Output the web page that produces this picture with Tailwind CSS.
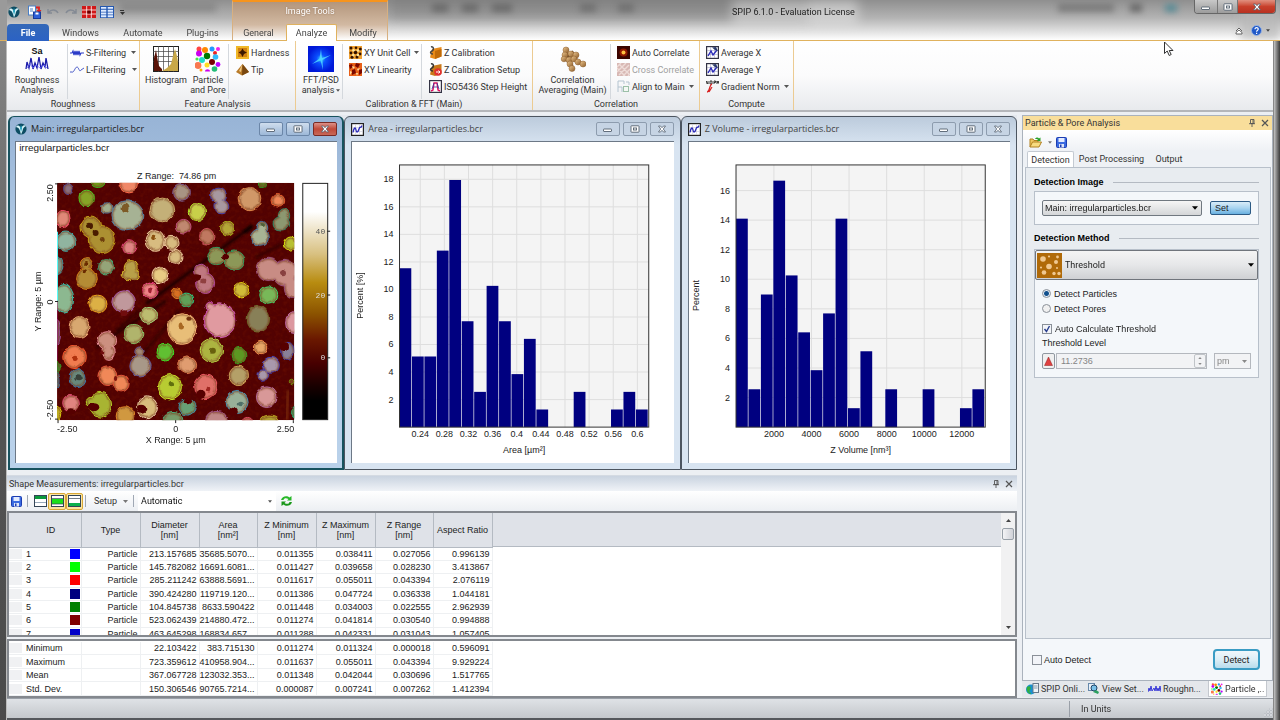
<!DOCTYPE html>
<html lang="en">
<head>
<meta charset="utf-8">
<title>SPIP 6.1.0 - Evaluation License</title>
<script src="https://cdn.jsdelivr.net/npm/@tailwindcss/browser@4"></script>
</head>
<body class="h-screen overflow-hidden bg-[#4a4a4a] [font-family:Roboto,'Open_Sans',sans-serif] text-[9px] leading-[10px] text-[#333]">
<svg class="absolute size-0" aria-hidden="true">
  <defs>
    <linearGradient id="gBrown" x1="0" y1="0" x2="1" y2="1"><stop offset="0" stop-color="#eec890"/><stop offset="1" stop-color="#8b5a28"/></linearGradient>
  </defs>
  <symbol id="logo" viewBox="0 0 12 12"><circle cx="6" cy="6" r="5.6" fill="#0d4d63"/><path d="M1 4C3 1 5 3 6 6C7 3 9 1 11 3C9 4 8 5 7.5 8L6 11.5L5 8C4 5 3 4.500 1 4Z" fill="#d8f4fa"/><path d="M6 2l1.200 3L6 9L5 5Z" fill="#2aa5c0"/></symbol>
  <symbol id="save" viewBox="0 0 11 11"><rect x=".5" y=".5" width="10" height="10" rx="1" fill="#3a6ae0" stroke="#1c3cb0"/><rect x="2.500" y="1" width="6" height="4" fill="#e4ecff"/><rect x="3" y="7" width="5" height="3.500" fill="#dfe6f8"/><rect x="4" y="7.500" width="1.500" height="2.500" fill="#1c3cb0"/></symbol>
  <symbol id="arrow" viewBox="0 0 5 3"><path d="M0 0h5L2.500 3Z" fill="currentColor"/></symbol>
  <symbol id="chart" viewBox="0 0 13 13"><rect x=".6" y=".6" width="11.800" height="11.800" fill="#fff" stroke="#222" stroke-width="1.200"/><path d="M4.500 1v11M8.500 1v11M1 4.500h11M1 8.500h11" stroke="#c8c8d8" stroke-width=".6"/><path d="M2 9.500C3 4 4.500 4 5 7S7 9.500 8 6S10 6 11 2.500" fill="none" stroke="#2b2bb8" stroke-width="1.300"/></symbol>
  <symbol id="avg" viewBox="0 0 13 13"><rect x=".6" y=".6" width="11.800" height="11.800" fill="#fff" stroke="#334" stroke-width="1.200"/><path d="M4.500 1v11M8.500 1v11M1 4.500h11M1 8.500h11" stroke="#a8a8c8" stroke-width=".6"/><path d="M2 10L5 5L7 9L11 4" fill="none" stroke="#2b2bb8" stroke-width="1.400"/><path d="M6 1.500L10 1L12 5L9 4Z" fill="#2c3c6c"/></symbol>
  <symbol id="win-min" viewBox="0 0 12 8"><rect x="1.500" y="4" width="8" height="2.500" rx=".5" fill="#fff" stroke="#53606e" stroke-width=".9"/></symbol>
  <symbol id="win-max" viewBox="0 0 12 8"><rect x="2" y=".8" width="8" height="6.400" rx=".5" fill="#fff" stroke="#53606e" stroke-width=".9"/><rect x="4.500" y="3" width="3" height="2" fill="#fff" stroke="#53606e" stroke-width=".9"/></symbol>
  <symbol id="win-x" viewBox="0 0 12 8"><path d="M2.500 1h2L6 2.700L7.500 1h2L7.300 4L9.500 7h-2L6 5.300L4.500 7h-2L4.700 4Z" fill="#fff" stroke="#53606e" stroke-width=".8"/></symbol>
  <symbol id="pin" viewBox="0 0 8 8"><path d="M2.500.5h3.500V4.500H2.500ZM5 .5V4.500M1 4.700H7M4 4.700V8" fill="none" stroke="#555" stroke-width=".9"/></symbol>
  <symbol id="cross" viewBox="0 0 8 8"><path d="M1 1L7 7M7 1L1 7" stroke="#555" stroke-width="1.200"/></symbol>
  <symbol id="dots" viewBox="0 0 26 26"><g><circle cx="4" cy="3" r="2.500" fill="#f44"/><circle cx="10" cy="4" r="3" fill="#f80"/><circle cx="17" cy="3" r="2.500" fill="#29f"/><circle cx="23" cy="3" r="2" fill="#e2e"/><circle cx="4" cy="7.500" r="3" fill="#c0e"/><circle cx="20" cy="7" r="2" fill="#e22"/><circle cx="12" cy="10" r="3.200" fill="#070"/><circle cx="20.500" cy="11" r="2.800" fill="#3bf"/><circle cx="7" cy="14" r="3" fill="#2dc"/><circle cx="2" cy="13" r="1.600" fill="#4e4"/><circle cx="17" cy="16" r="3" fill="#700"/><circle cx="3" cy="19.500" r="3.400" fill="#f87850"/><circle cx="12" cy="19" r="2.500" fill="#fd2"/><circle cx="23" cy="18.500" r="2.400" fill="#b0f"/><circle cx="19.500" cy="23" r="2.800" fill="#2b7"/><path d="M10 25.500c0-3 5-3 5 0Z" fill="#c0e"/><circle cx="6" cy="24" r="1.500" fill="#fa0"/></g></symbol>
</svg>

<div class="flex h-full flex-col">
  <!-- title bar and ribbon tabs -->
  <header class="relative flex h-[41px] shrink-0 flex-col border-b border-[#e0b25e] bg-linear-to-b from-[#8f8f8f] via-[#b4b4b4] via-45% to-white">
    <div class="pointer-events-none absolute inset-0 overflow-hidden" aria-hidden="true">
      <div class="absolute -top-2 left-[388px] h-7 w-[420px] bg-[#6f6f6f]/40 blur-[6px]"></div>
      <div class="absolute top-1 left-[120px] h-2 w-24 bg-[#666]/40 blur-[3px]"></div>
      <div class="absolute top-1 left-[432px] h-2 w-4 bg-[#555]/60 blur-[3px]"></div>
      <div class="absolute top-1 left-[462px] h-2 w-4 bg-[#555]/60 blur-[3px]"></div>
      <div class="absolute top-1 left-[492px] h-2 w-5 bg-[#555]/60 blur-[3px]"></div>
      <div class="absolute top-1 left-[580px] h-2 w-4 bg-[#555]/50 blur-[3px]"></div>
      <div class="absolute top-1 left-[618px] h-2 w-4 bg-[#555]/50 blur-[3px]"></div>
      <div class="absolute top-0 left-[732px] h-6 w-[126px] bg-white/40 blur-[6px]"></div>
      <div class="absolute top-1 left-[1058px] h-2 w-14 bg-[#555]/50 blur-[3px]"></div>
      <div class="absolute top-1 left-[1130px] h-2 w-3 bg-[#444]/60 blur-[3px]"></div>
      <div class="absolute top-1 left-[1165px] h-2 w-3 bg-[#5a8c96] blur-[3px]"></div>
      <div class="absolute top-0 right-0 h-full w-10 bg-[#b8b8b8]/70 blur-[4px]"></div>
      <div class="absolute top-0 left-0 h-full w-[7px] bg-[#9a9a9a]"></div>
      <div class="absolute inset-y-0 left-[232px] w-[156px] border-x border-t-2 border-x-[#d8b080] border-t-[#f7941d] bg-linear-to-b from-[#b3967c] via-[#d2b9a2] via-60% to-white"></div>
    </div>
    <div class="relative grid h-6 grid-cols-[232px_156px_1fr_auto] items-start">
      <div class="flex h-6 items-center gap-2 pl-2">
        <svg class="size-3"><use href="#logo"/></svg>
        <div class="flex items-center gap-1">
          <button aria-label="Import" class="size-[14px]"><svg class="size-[14px]" viewBox="0 0 14 14"><rect x=".5" y="1" width="7" height="9" fill="#fff" stroke="#4a80c8"/><path d="M2 4h3M2 6h3" stroke="#4a80c8"/><path d="M8 2.500h3V6" fill="none" stroke="#e02020" stroke-width="1.800"/><path d="M8.500 5h5L11 8Z" fill="#e02020"/><rect x="5.500" y="7" width="7" height="6.500" fill="#2d5fd8" stroke="#173a9c"/><rect x="7.500" y="7.500" width="3" height="2" fill="#fff"/></svg></button>
          <button aria-label="Undo" class="size-[14px]"><svg class="size-[14px]" viewBox="0 0 14 14"><path d="M2 4v4h4M2.500 7.500C5 4 10 4 12 8" fill="none" stroke="#848a94" stroke-width="1.500"/></svg></button>
          <button aria-label="Redo" class="size-[14px]"><svg class="size-[14px]" viewBox="0 0 14 14"><path d="M12 4v4H8M11.500 7.500C9 4 4 4 2 8" fill="none" stroke="#848a94" stroke-width="1.500"/></svg></button>
          <button aria-label="Grid view" class="h-3 w-[14px]"><svg class="h-3 w-[14px]" viewBox="0 0 14 12"><rect width="14" height="12" fill="#d01818"/><path d="M4.700 0v12M9.300 0v12M0 4h14M0 8h14" stroke="#fff" stroke-width=".8"/><rect x="5.300" y="4.600" width="3.400" height="3" fill="#600"/></svg></button>
          <button aria-label="Table view" class="h-3 w-[14px]"><svg class="h-3 w-[14px]" viewBox="0 0 14 12"><rect width="14" height="12" fill="#2458b0"/><path d="M1 3.700h5.300v2H1ZM7.700 3.700H13v2H7.700ZM1 6.500h5.300v2H1ZM7.700 6.500H13v2H7.700ZM1 9.300h5.300v2H1ZM7.700 9.300H13v2H7.700ZM1 1h5.300v1.800H1ZM7.700 1H13v1.800H7.700Z" fill="#e0ecff"/></svg></button>
          <button aria-label="Customize quick access" class="flex w-2 flex-col items-center gap-px text-[#333]"><span class="h-px w-1 bg-[#333]"></span><svg class="h-[3px] w-[5px]"><use href="#arrow"/></svg></button>
        </div>
      </div>
      <div class="pt-[6px] text-center text-white [text-shadow:0_0_2px_#8a6a50]">Image Tools</div>
      <div class="pt-[7px] pl-[344px] text-[#222]">SPIP 6.1.0 - Evaluation License</div>
      <div class="mr-1 flex h-[14px] overflow-hidden rounded-b border border-t-0 border-[#666] bg-white/20">
        <button aria-label="Minimize" class="flex w-[23px] items-center justify-center border-r border-[#777] bg-linear-to-b from-[#c8c8c8] to-[#9c9c9c]"><svg class="h-2 w-3"><use href="#win-min"/></svg></button>
        <button aria-label="Maximize" class="flex w-5 items-center justify-center border-r border-[#777] bg-linear-to-b from-[#c8c8c8] to-[#9c9c9c]"><svg class="h-2 w-3"><use href="#win-max"/></svg></button>
        <button aria-label="Close" class="flex w-[37px] items-center justify-center bg-linear-to-b from-[#e09080] via-[#c8402c] to-[#b83020]"><svg class="h-2 w-3"><use href="#win-x"/></svg></button>
      </div>
    </div>
    <nav class="relative -mb-px flex h-[17px] items-stretch pr-[10px] pl-[7px] text-[#444]">
      <button class="w-[42px] rounded-t-sm bg-linear-to-b from-[#3468b8] to-[#2b62c4] font-bold text-white">File</button>
      <button class="w-[63px]">Windows</button>
      <button class="w-[62px]">Automate</button>
      <button class="w-[57px]">Plug-ins</button>
      <button class="w-[55px]">General</button>
      <button class="w-[51px] rounded-t-xs border border-b-0 border-[#e0b25e] bg-white">Analyze</button>
      <button class="w-[52px]">Modify</button>
      <span class="flex-1"></span>
      <span class="flex items-start gap-2 pt-[1px]">
        <button aria-label="Collapse ribbon"><svg class="mt-[2px] h-2 w-2" viewBox="0 0 8 8"><path d="M1 4L4 1L7 4M1 7V5.500L4 3L7 5.500V7Z" fill="#fff" stroke="#555" stroke-width=".9"/></svg></button>
        <button aria-label="Help" class="flex items-center gap-1"><svg class="size-[11px]" viewBox="0 0 11 11"><circle cx="5.500" cy="5.500" r="5" fill="#1f58c8" stroke="#9ab4e0"/><path d="M4 4.200C4 2 7.300 2.200 7.200 4.200C7.200 5.300 5.600 5.200 5.600 6.700M5.600 7.800V9" fill="none" stroke="#fff" stroke-width="1.200"/></svg><svg class="h-[3px] w-[4px]"><use href="#arrow"/></svg></button>
      </span>
    </nav>
  </header>

  <div class="flex min-h-0 flex-1">
    <div class="w-[7px] shrink-0 border-r border-[#bbb] bg-linear-to-b from-[#858585] via-[#555] to-[#4a4a4a]"></div>
    <div class="flex min-w-0 flex-1 flex-col bg-[#eceff3]">
      <!-- ribbon -->
      <div class="flex h-[71px] shrink-0 border-b-2 border-[#b4b6ba] bg-linear-to-b from-white via-[#fbfbfc] to-[#e8eaed] whitespace-nowrap">
        <section class="flex w-[133px] flex-col border-r border-[#eccb92]">
          <div class="flex h-[58px] pt-[3px]">
            <button class="flex w-[60px] flex-col items-center"><svg class="mt-[2px] h-[26px] w-6" viewBox="0 0 24 26"><text x="12" y="8" text-anchor="middle" font-family="Liberation Sans" font-size="9" font-weight="bold" fill="#111">Sa</text><path d="M1 23L2 16L4 22L6 12L8 23L10 17L12 22L14 11L16 23L18 17L20 21L21 12L23 23" fill="none" stroke="#1a1aa8" stroke-width="1.300"/><path d="M2 22L5 18L8 22L11 19L15 22L19 19L22 22" fill="none" stroke="#6a6aff" stroke-width=".8"/></svg><span class="mt-[3px]">Roughness<br>Analysis</span></button>
            <div class="flex flex-col border-l border-[#d4d8dd] pl-[2px]">
              <button class="flex h-[17px] items-center"><svg class="mr-[2px] h-3 w-[14px]" viewBox="0 0 14 12"><path d="M0 6H2L3 4L4 8L5 4L6 8L7 4L8 8L9 4L10 8L11 6H14" fill="none" stroke="#2a3ac8" stroke-width="1.200"/></svg>S-Filtering<svg class="ml-[5px] h-[3px] w-[5px] text-[#555]"><use href="#arrow"/></svg></button>
              <button class="flex h-[17px] items-center"><svg class="mr-[2px] h-3 w-[14px]" viewBox="0 0 14 12"><path d="M0 8H2C4 9 5 3 7 3S9 9 11 6L14 4" fill="none" stroke="#4a5ac8"/></svg>L-Filtering<svg class="ml-[6px] h-[3px] w-[5px] text-[#555]"><use href="#arrow"/></svg></button>
            </div>
          </div>
          <div class="text-center">Roughness</div>
        </section>
        <section class="flex w-[156px] flex-col border-r border-[#eccb92]">
          <div class="flex h-[58px] pt-[3px]">
            <button class="ml-[4px] flex w-[44px] flex-col items-center"><svg class="mt-[2px] size-[26px]" viewBox="0 0 26 26"><rect x=".5" y=".5" width="25" height="25" fill="#fff" stroke="#222"/><path d="M5.500 0v26M10.500 0v26M15.500 0v26M20.500 0v26M0 5.500h26M0 10.500h26M0 15.500h26" stroke="#444" stroke-width=".7"/><path d="M1 25V12L2 8L3 4L4 10L5 16L6 20L9 23V25Z" fill="#5a1408"/><path d="M9 25L14 22L18 18L20 10L22 3L24 10L25 16V25Z" fill="#c8a848"/></svg><span class="mt-[3px]">Histogram</span></button>
            <button class="flex w-[40px] flex-col items-center"><svg class="mt-[2px] size-[26px]"><use href="#dots"/></svg><span class="mt-[3px]">Particle<br>and Pore</span></button>
            <div class="flex flex-col border-l border-[#d4d8dd] pl-[7px]">
              <button class="flex h-[17px] items-center"><svg class="mr-[2px] size-[13px]" viewBox="0 0 13 13"><rect width="13" height="13" fill="#f0b828"/><rect x="2" y="2" width="9" height="9" fill="#d08010"/><path d="M6.500 2.500L8 5L11 6.500L8 8L6.500 11L5 8L2.500 6.500L5 5Z" fill="#3a1800"/></svg>Hardness</button>
              <button class="flex h-[17px] items-center"><svg class="mr-[2px] size-[13px]" viewBox="0 0 13 13"><path d="M6.500 1L0 9L6 12.500L13 9Z" fill="#b87a28"/><path d="M6.500 1L6 12.500L13 9Z" fill="#7a4810"/><path d="M6.500 1L3 8L5 9Z" fill="#f0c880"/></svg>Tip</button>
            </div>
          </div>
          <div class="text-center">Feature Analysis</div>
        </section>
        <section class="flex w-[237px] flex-col border-r border-[#eccb92]">
          <div class="flex h-[58px] pt-[3px]">
            <button class="flex w-[46px] flex-col items-center pl-1"><svg class="mt-[2px] size-[26px]" viewBox="0 0 26 26"><defs><radialGradient id="fft"><stop offset="0" stop-color="#3cf"/><stop offset=".35" stop-color="#0a50ff"/><stop offset="1" stop-color="#0018d8"/></radialGradient></defs><rect width="26" height="26" fill="url(#fft)"/><path d="M13 3L14 12L23 9L14.500 14L15 24L12.500 14.500L4 18L11.500 12.500Z" fill="#5df" opacity=".8"/></svg><span class="mt-[3px]">FFT/PSD<br><span class="flex items-center">analysis<svg class="ml-[2px] h-[3px] w-[4px] text-[#555]"><use href="#arrow"/></svg></span></span></button>
            <div class="flex w-[79px] flex-col border-l border-[#d4d8dd] pl-[6px]">
              <button class="flex h-[17px] items-center"><svg class="mr-[2px] size-[13px]" viewBox="0 0 13 13"><rect width="13" height="13" fill="#f0a030"/><g fill="#301000"><circle cx="2" cy="2" r="1.500"/><circle cx="7" cy="1.800" r="1.300"/><circle cx="11.300" cy="3" r="1.500"/><circle cx="2" cy="7" r="1.400"/><circle cx="6.500" cy="6.500" r="1.800"/><circle cx="11" cy="8" r="1.400"/><circle cx="3" cy="11.300" r="1.500"/><circle cx="8" cy="11" r="1.500"/></g><g fill="#ffe8a0"><circle cx="4.500" cy="4.300" r="1.200"/><circle cx="9" cy="4.500" r="1.200"/><circle cx="4.300" cy="9" r="1.200"/><circle cx="9" cy="9" r="1.200"/></g></svg>XY Unit Cell<svg class="ml-1 h-[3px] w-[5px] text-[#555]"><use href="#arrow"/></svg></button>
              <button class="flex h-[17px] items-center"><svg class="mr-[2px] size-[13px]" viewBox="0 0 13 13"><rect width="13" height="13" fill="#e86018"/><path d="M0 2L3 1L4 4L1 6ZM7 0L11 1L9 5L6 3ZM3 7L6 6L7 10L3 12ZM10 7L13 6V10L10 12Z" fill="#7a0800"/><path d="M3 3L6 4L4 6ZM8 6L11 5L9 8ZM1 8L3 9L1 12ZM7 10L9 10L8 13Z" fill="#ffe0a0"/></svg>XY Linearity</button>
            </div>
            <div class="flex flex-col border-l border-[#d4d8dd] pl-[7px]">
              <button class="flex h-[17px] items-center"><svg class="mr-[2px] size-[13px]" viewBox="0 0 13 13"><path d="M3 3L12.500 1V10.500L6 13L1 11.500Z" fill="#e88a18"/><path d="M6 5L12.500 3V10.500L6 13Z" fill="#c06a08"/><path d="M2 1C5 0 5 4 3 5S1 8 4 8" fill="none" stroke="#444" stroke-width="1.500"/></svg>Z Calibration</button>
              <button class="flex h-[17px] items-center"><svg class="mr-[2px] size-[13px]" viewBox="0 0 13 13"><path d="M3 3L12.500 1V10.500L6 13L1 11.500Z" fill="#c87818"/><path d="M2 1C5 0 5 4 3 5S1 8 4 8" fill="none" stroke="#333" stroke-width="1.500"/><circle cx="9" cy="9" r="3.800" fill="#e03030"/><path d="M7 9h4M9.500 7.500L11 9L9.500 10.500" stroke="#fff" fill="none"/></svg>Z Calibration Setup</button>
              <button class="flex h-[17px] items-center"><svg class="mr-[2px] size-[13px]" viewBox="0 0 13 13"><rect x=".6" y=".6" width="11.800" height="11.800" fill="#fff" stroke="#334" stroke-width="1.200"/><path d="M2 11L4 10L5 3H8L9 10L11 11" fill="none" stroke="#e01060" stroke-width="1.400"/><path d="M4.500 7H8.500M5 3L3 9M8 3L10 9" stroke="#2838a0" stroke-width=".8"/></svg>ISO5436 Step Height</button>
            </div>
          </div>
          <div class="text-center">Calibration &amp; FFT (Main)</div>
        </section>
        <section class="flex w-[167px] flex-col border-r border-[#eccb92]">
          <div class="flex h-[58px] pt-[3px]">
            <button class="flex w-[77px] flex-col items-center pl-[2px]"><svg class="mt-[2px] size-[26px]" viewBox="0 0 26 26"><path d="M6 4L10 18L12 24M6 8L14 12L23 18M5 13L13 20M12 5L17 13" stroke="#402000" stroke-width="1.500"/><g fill="url(#gBrown)" stroke="#8a5a28" stroke-width=".5"><circle cx="6" cy="4" r="3"/><circle cx="5" cy="9" r="3"/><circle cx="4" cy="13" r="2.800"/><circle cx="11" cy="8" r="3"/><circle cx="16" cy="9" r="3"/><circle cx="9" cy="14" r="3"/><circle cx="14" cy="13" r="3"/><circle cx="10" cy="18" r="3"/><circle cx="18" cy="16" r="3"/><circle cx="23" cy="18" r="3"/><circle cx="12" cy="22.500" r="3"/></g></svg><span class="mt-[3px]">Correlation<br>Averaging (Main)</span></button>
            <div class="flex flex-col border-l border-[#d4d8dd] pl-[6px]">
              <button class="flex h-[17px] items-center"><svg class="mr-[2px] size-[13px]" viewBox="0 0 13 13"><rect width="13" height="13" fill="#3a0400"/><circle cx="6.500" cy="6.500" r="4" fill="#901800"/><circle cx="6.500" cy="6.500" r="2" fill="#ffc040"/></svg>Auto Correlate</button>
              <button disabled class="flex h-[17px] items-center text-[#a0a0a0]"><svg class="mr-[2px] size-[13px]" viewBox="0 0 13 13"><rect width="13" height="13" fill="#d8b8b4"/><path d="M0 4L4 0M0 9L9 0M2 12L12 2M6 13L13 6M11 13L13 11M2 1L12 11M0 5L8 13" stroke="#eedcd8" stroke-width="1.400"/></svg>Cross Correlate</button>
              <button class="flex h-[17px] items-center"><svg class="mr-[2px] size-[13px]" viewBox="0 0 13 13"><path d="M1 12V1H7V4M1 7H5V12" fill="none" stroke="#b4c4d0"/><rect x="6.500" y="6.500" width="5" height="5" fill="#f4f8f4" stroke="#9cc0a8"/><path d="M9 2h3v3" fill="none" stroke="#b4c4d0"/></svg>Align to Main<svg class="ml-1 h-[3px] w-[5px] text-[#555]"><use href="#arrow"/></svg></button>
            </div>
          </div>
          <div class="text-center">Correlation</div>
        </section>
        <section class="flex w-[94px] flex-col border-r border-[#eccb92]">
          <div class="flex h-[58px] flex-col pt-[3px] pl-[6px]">
            <button class="flex h-[17px] items-center"><svg class="mr-[2px] size-[13px]"><use href="#avg"/></svg>Average X</button>
            <button class="flex h-[17px] items-center"><svg class="mr-[2px] size-[13px]"><use href="#avg"/></svg>Average Y</button>
            <button class="flex h-[17px] items-center"><svg class="mr-[2px] size-[13px]" viewBox="0 0 13 13"><path d="M0 1V4M0 1L2 4V1M4 1H6V4H4ZM8 4V1H9.500V2.500H8M11 4V1L12 3L13 1V4" fill="none" stroke="#222" stroke-width=".9"/><path d="M1 12C4 12 3 5 6 4M3 12L6 7" fill="none" stroke="#d82020" stroke-width="1.200"/></svg>Gradient Norm<svg class="ml-1 h-[3px] w-[5px] text-[#555]"><use href="#arrow"/></svg></button>
          </div>
          <div class="text-center">Compute</div>
        </section>
      </div>

      <div class="flex min-h-0 flex-1 pt-[3px]">
        <main class="flex min-w-0 flex-1 flex-col">
          <!-- document windows -->
          <div class="flex min-h-0 flex-1 bg-[#e4e8ee] pt-px pl-px text-[#333]">
            <article class="flex min-w-0 flex-1 flex-col rounded-t-md border-2 border-t border-[#17525e] bg-linear-to-b from-[#98b4d6] via-[#b9d1ea] to-[#b9d1ea] px-[5px] pb-[5px]">
              <div class="flex h-6 items-center gap-[3px]">
                <svg class="mr-px size-3"><use href="#logo"/></svg><h2 class="flex-1 [font-family:'Open_Sans',sans-serif] text-[#222]">Main: irregularparticles.bcr</h2>
                <button aria-label="Minimize" class="flex h-[14px] w-6 items-center justify-center rounded-xs border border-[#6b86a8] bg-linear-to-b from-[#cfdded] to-[#9db8d8]"><svg class="h-2 w-3"><use href="#win-min"/></svg></button>
                <button aria-label="Maximize" class="flex h-[14px] w-6 items-center justify-center rounded-xs border border-[#6b86a8] bg-linear-to-b from-[#cfdded] to-[#9db8d8]"><svg class="h-2 w-3"><use href="#win-max"/></svg></button>
                <button aria-label="Close" class="flex h-[14px] w-6 items-center justify-center rounded-xs border border-[#7a2a24] bg-linear-to-b from-[#dc9088] via-[#c04838] to-[#c86858]"><svg class="h-2 w-3"><use href="#win-x"/></svg></button>
              </div>
              <div class="min-h-0 flex-1 border-t border-l border-[#6c7886] bg-white"><svg id="scan" class="block h-full w-full" viewBox="16 141 322 322" font-family="Liberation Sans, sans-serif" font-size="9" fill="#222"></svg></div>
            </article>
            <article class="flex min-w-0 flex-1 flex-col rounded-t-md border border-[#4c5560] bg-linear-to-b from-[#bccbdc] to-[#d8e4f1] to-8% px-[6px] pb-[6px]">
              <div class="flex h-6 items-center gap-[3px]">
                <svg class="mr-px size-[13px]"><use href="#chart"/></svg><h2 class="flex-1 [font-family:'Open_Sans',sans-serif] text-[#444]">Area - irregularparticles.bcr</h2>
                <button aria-label="Minimize" class="flex h-[14px] w-6 items-center justify-center rounded-xs border border-[#8d9cae] bg-[#c6d4e4]"><svg class="h-2 w-3"><use href="#win-min"/></svg></button>
                <button aria-label="Maximize" class="flex h-[14px] w-6 items-center justify-center rounded-xs border border-[#8d9cae] bg-[#c6d4e4]"><svg class="h-2 w-3"><use href="#win-max"/></svg></button>
                <button aria-label="Close" class="flex h-[14px] w-6 items-center justify-center rounded-xs border border-[#8d9cae] bg-[#c6d4e4]"><svg class="h-2 w-3"><use href="#win-x"/></svg></button>
              </div>
              <div class="min-h-0 flex-1 border-t border-l border-[#6c7886] bg-white"><svg id="area" class="block h-full w-full" viewBox="352 141 322 322" font-family="Liberation Sans, sans-serif" font-size="9" fill="#222"></svg></div>
            </article>
            <article class="flex min-w-0 flex-1 flex-col rounded-t-md border border-[#4c5560] bg-linear-to-b from-[#bccbdc] to-[#d8e4f1] to-8% px-[6px] pb-[6px]">
              <div class="flex h-6 items-center gap-[3px]">
                <svg class="mr-px size-[13px]"><use href="#chart"/></svg><h2 class="flex-1 [font-family:'Open_Sans',sans-serif] text-[#444]">Z Volume - irregularparticles.bcr</h2>
                <button aria-label="Minimize" class="flex h-[14px] w-6 items-center justify-center rounded-xs border border-[#8d9cae] bg-[#c6d4e4]"><svg class="h-2 w-3"><use href="#win-min"/></svg></button>
                <button aria-label="Maximize" class="flex h-[14px] w-6 items-center justify-center rounded-xs border border-[#8d9cae] bg-[#c6d4e4]"><svg class="h-2 w-3"><use href="#win-max"/></svg></button>
                <button aria-label="Close" class="flex h-[14px] w-6 items-center justify-center rounded-xs border border-[#8d9cae] bg-[#c6d4e4]"><svg class="h-2 w-3"><use href="#win-x"/></svg></button>
              </div>
              <div class="min-h-0 flex-1 border-t border-l border-[#6c7886] bg-white"><svg id="zvol" class="block h-full w-full" viewBox="689 141 322 322" font-family="Liberation Sans, sans-serif" font-size="9" fill="#222"></svg></div>
            </article>
          </div>

          <!-- shape measurements -->
          <section class="mt-[5px] flex h-[223px] shrink-0 flex-col border-t border-[#d4dae2]">
            <div class="flex h-[15px] items-center bg-linear-to-b from-[#c9d3e0] to-[#f0f3f7] pr-1 pl-[2px]">
              <h2 class="flex-1">Shape Measurements: irregularparticles.bcr</h2>
              <button aria-label="Pin panel" class="mr-[5px]"><svg class="size-2"><use href="#pin"/></svg></button>
              <button aria-label="Close panel"><svg class="size-2"><use href="#cross"/></svg></button>
            </div>
            <div class="flex h-5 items-center bg-linear-to-b from-white to-[#eceff3] pl-1">
              <button aria-label="Save"><svg class="size-[11px]"><use href="#save"/></svg></button>
              <span class="mr-1 ml-[5px] h-3 w-px bg-[#a0a8b4]"></span>
              <button aria-label="Show header" class="flex h-[17px] w-4 items-center justify-center"><svg class="h-3 w-[13px]" viewBox="0 0 13 12"><rect x=".5" y=".5" width="12" height="11" fill="#fff" stroke="#345"/><path d="M1 1h11v3H1Z" fill="#0b9a3c"/><path d="M1 7.500h11" stroke="#9ab"/></svg></button>
              <button aria-label="Show rows" class="flex h-[17px] w-[18px] items-center justify-center rounded-xs border border-[#d8a838] bg-[#fbe4a0]"><svg class="h-3 w-[13px]" viewBox="0 0 13 12"><rect x=".5" y=".5" width="12" height="11" fill="#fff" stroke="#345"/><path d="M1 4h11v5H1Z" fill="#1ae01a"/><path d="M1 3.500h11M1 9h11" stroke="#345" stroke-width=".7"/></svg></button>
              <button aria-label="Show summary" class="flex h-[17px] w-[17px] items-center justify-center rounded-xs border border-[#d8a838] bg-[#fbe4a0]"><svg class="h-3 w-[13px]" viewBox="0 0 13 12"><rect x=".5" y=".5" width="12" height="11" fill="#fff" stroke="#345"/><path d="M1 8h11v3H1Z" fill="#0bb04c"/><path d="M1 3.500h11" stroke="#345" stroke-width=".7"/></svg></button>
              <span class="mx-[2px] h-3 w-px bg-[#a0a8b4]"></span>
              <button class="ml-[6px] flex items-center">Setup<svg class="ml-[6px] h-[3px] w-[5px] text-[#777]"><use href="#arrow"/></svg></button>
              <span class="mr-1 ml-[5px] h-3 w-px bg-[#a0a8b4]"></span>
              <div class="relative flex h-full w-[138px] items-center"><select aria-label="Measurement mode" class="h-full w-full appearance-none bg-white pr-3 pl-[3px] leading-[14px] text-[#111]"><option>Automatic</option></select><svg class="pointer-events-none absolute right-1 h-[3px] w-[4px] text-[#555]"><use href="#arrow"/></svg></div>
              <button aria-label="Refresh" class="ml-1"><svg class="h-3 w-[13px]" viewBox="0 0 13 12"><path d="M1 5C2 1 7 0 9.500 2.500L11.500 1V5.500H7L8.500 4C6 2.500 4 3 3.500 5Z" fill="#28b828"/><path d="M12 7C11 11 6 12 3.500 9.500L1.500 11V6.500H6L4.500 8C7 9.500 9 9 9.500 7Z" fill="#1a981a"/></svg></button>
            </div>
            <div class="flex h-[126px] shrink-0 border-2 border-[#84888e] bg-white [font-family:Liberation_Sans,sans-serif] text-[#222]">
              <div class="flex min-w-0 flex-1 items-start overflow-hidden bg-white">
                  <table class="w-[483px] shrink-0 table-fixed border-collapse">
                    <colgroup><col class="w-[72px]"><col class="w-[59px]"><col class="w-[59px]"><col class="w-[58px]"><col class="w-[59px]"><col class="w-[59px]"><col class="w-[58px]"><col class="w-[59px]"></colgroup>
                    <thead class="bg-[#dfe2e8]"><tr class="h-[34px]">
                      <th class="border-r border-b border-[#b4bac2] pl-3 font-normal">ID</th><th class="border-r border-b border-[#b4bac2] font-normal">Type</th><th class="border-r border-b border-[#b4bac2] font-normal">Diameter<br>[nm]</th><th class="border-r border-b border-[#b4bac2] font-normal">Area<br>[nm²]</th><th class="border-r border-b border-[#b4bac2] font-normal">Z Minimum<br>[nm]</th><th class="border-r border-b border-[#b4bac2] font-normal">Z Maximum<br>[nm]</th><th class="border-r border-b border-[#b4bac2] font-normal">Z Range<br>[nm]</th><th class="border-r border-b border-[#b4bac2] font-normal">Aspect Ratio</th>
                    </tr></thead>
                    <tbody id="rows" class="bg-white"></tbody>
                  </table>
                  <div class="h-[34px] flex-1 border-b border-[#b4bac2] bg-[#dfe2e8]"></div>
              </div>
              <div class="flex w-[14px] flex-col items-center bg-[#f1f1f2] py-[6px]" role="scrollbar" aria-controls="rows" aria-valuenow="0">
                <svg class="h-[3px] w-[5px] rotate-180 text-[#444]"><use href="#arrow"/></svg>
                <span class="mt-[6px] h-3 w-3 rounded-xs border border-[#98a0a8] bg-linear-to-r from-[#f4f4f6] to-[#d0d2d8]"></span>
                <span class="flex-1"></span>
                <svg class="h-[3px] w-[5px] text-[#444]"><use href="#arrow"/></svg>
              </div>
            </div>
            <div class="mt-[2px] h-[59px] shrink-0 border-2 border-[#84888e] bg-white pt-px [font-family:Liberation_Sans,sans-serif] text-[#222]">
              <table class="h-[54px] w-[483px] table-fixed border-collapse">
                <colgroup><col class="w-[72px]"><col class="w-[59px]"><col class="w-[59px]"><col class="w-[58px]"><col class="w-[59px]"><col class="w-[59px]"><col class="w-[58px]"><col class="w-[59px]"></colgroup>
                <tbody id="summary"></tbody>
              </table>
            </div>
          </section>
        </main>

        <!-- particle & pore analysis -->
        <aside class="ml-[5px] flex w-[251px] shrink-0 flex-col">
          <div class="flex min-h-0 flex-1 flex-col border border-[#aab2bc] bg-[#f4f7fa]">
            <div class="flex h-[14px] shrink-0 items-center bg-[#f9de9b] pr-[3px] pl-[2px]"><h2 class="flex-1">Particle &amp; Pore Analysis</h2><button aria-label="Pin panel" class="mr-[5px]"><svg class="size-2"><use href="#pin"/></svg></button><button aria-label="Close panel"><svg class="size-2"><use href="#cross"/></svg></button></div>
            <div class="flex h-[21px] shrink-0 items-center bg-linear-to-b from-white to-[#eef1f5] pt-[3px] pl-[6px]">
              <button aria-label="Open" class="flex items-center gap-[6px]"><svg class="h-3 w-[13px]" viewBox="0 0 13 12"><path d="M1 11V3H4L5 4.500H9V6" fill="#f0c860" stroke="#b08020"/><path d="M1 11L3.500 6H12.500L10 11Z" fill="#f8dc80" stroke="#b08020"/><path d="M6 3C7 1 9 1 10 2.500L11.500 1.500V5H8L9 3.800C8 3 7 3 6 3Z" fill="#28a028"/></svg><svg class="h-[3px] w-[4px] text-[#777]"><use href="#arrow"/></svg></button>
              <button aria-label="Save" class="ml-[4px]"><svg class="size-[11px]"><use href="#save"/></svg></button>
            </div>
            <div class="flex h-[16px] shrink-0 items-stretch bg-[#eef1f5] pl-1" role="tablist">
              <button role="tab" aria-selected="true" class="w-[47px] rounded-t-xs border border-b-0 border-[#c4cad2] bg-white">Detection</button>
              <button role="tab" class="w-[75px]">Post Processing</button>
              <button role="tab" class="w-[40px]">Output</button>
            </div>
            <div class="mr-[1px] ml-[2px] flex min-h-0 flex-1 flex-col border border-[#b8c0ca] bg-[#e8ecf0] pr-[11px] pl-2 [font-family:Liberation_Sans,sans-serif] text-[#222]">
              <div class="mt-[9px] flex items-center gap-[9px] font-bold text-black"><h3>Detection Image</h3><span class="h-px flex-1 bg-[#b4bac2]"></span></div>
              <div class="mt-1 flex h-[34px] shrink-0 items-center gap-2 border border-[#b8c0ca] bg-[#f4f7fa] px-[7px]">
                <div class="relative flex flex-1 items-center"><select aria-label="Detection image" class="h-4 w-full appearance-none rounded-xs border border-[#707880] bg-linear-to-b from-[#f6f6f6] to-[#d4d6d8] pl-[2px]"><option>Main: irregularparticles.bcr</option></select><svg class="pointer-events-none absolute right-1 h-[4px] w-[6px] text-black"><use href="#arrow"/></svg></div>
                <button class="h-[14px] w-[41px] rounded-xs border border-[#2c5a84] bg-linear-to-b from-[#d8ecf8] via-[#a8d4f0] to-[#68b0e0] pl-1 text-left">Set</button>
              </div>
              <div class="mt-2 flex items-center gap-[9px] font-bold text-black"><h3>Detection Method</h3><span class="h-px flex-1 bg-[#b4bac2]"></span></div>
              <div class="mt-[6px] flex shrink-0 flex-col border border-[#b8c0ca] bg-[#f4f7fa] pb-2">
                <div class="relative flex h-[30px] items-center"><select aria-label="Detection method" class="h-[30px] w-full appearance-none rounded-xs border border-[#70757c] bg-linear-to-b from-[#f4f4f4] via-[#e6e7e9] to-[#cfd1d4] pl-[29px] [font-family:Roboto,sans-serif]"><option>Threshold</option></select>
                  <svg class="pointer-events-none absolute left-[2px] size-[25px]" viewBox="0 0 25 25"><rect width="25" height="25" fill="#b06a08"/><g fill="#f0c890"><circle cx="6" cy="6" r="2.800"/><circle cx="12" cy="13.500" r="2.800"/><circle cx="19" cy="9" r="2"/><circle cx="7" cy="19.500" r="2.300"/><circle cx="20.500" cy="4" r="1.400"/><circle cx="12" cy="3.500" r="1.100"/><circle cx="4" cy="14.500" r="1.100"/><circle cx="17" cy="20.500" r="1.700"/><circle cx="22" cy="20.500" r="1.700"/><circle cx="20" cy="15" r="1"/></g></svg>
                  <svg class="pointer-events-none absolute right-1 h-[4px] w-[6px] text-black"><use href="#arrow"/></svg></div>
                <div class="flex flex-col px-[7px] pt-[6px]">
                  <label class="flex h-[15px] items-center gap-[3px]"><input type="radio" name="target" checked class="size-[9px] appearance-none rounded-full border border-[#8a9098] bg-white bg-radial from-[#10508c] from-40% to-[#e4eef6] to-60%">Detect Particles</label>
                  <label class="flex h-[15px] items-center gap-[3px]"><input type="radio" name="target" class="size-[9px] appearance-none rounded-full border border-[#8a9098] bg-[#f0f0f0]">Detect Pores</label>
                  <label class="relative mt-[5px] flex h-[15px] items-center gap-[3px]"><input type="checkbox" checked class="peer size-[10px] appearance-none border border-[#8a9098] bg-[#f2f4f8]"><svg class="pointer-events-none absolute left-[1px] hidden size-2 peer-checked:block" viewBox="0 0 8 8"><path d="M1.500 4L3.500 6.500L6.500 1" fill="none" stroke="#263c8c" stroke-width="1.400"/></svg>Auto Calculate Threshold</label>
                  <label for="level" class="h-[15px] leading-[15px]">Threshold Level</label>
                  <div class="mt-[2px] flex h-4 items-stretch">
                    <button aria-label="Lock level" class="mr-px flex w-[13px] items-center justify-center rounded-xs border border-[#9098a0] bg-[#f0f0f0]"><svg class="size-[9px]" viewBox="0 0 9 9"><path d="M4.500 0L8.500 8.500H.5Z" fill="#e04040" stroke="#902020" stroke-width=".5"/></svg></button>
                    <div class="flex w-[151px] border border-[#b4b8be] bg-[#f2f3f5]"><input id="level" disabled value="11.2736" class="min-w-0 flex-1 pl-1 text-[#858585]">
                      <span class="flex w-3 flex-col items-center justify-center gap-[4px] rounded-xs border border-[#c0c4c8] text-[#888]"><svg class="h-[2px] w-1 rotate-180" viewBox="0 0 5 3"><path d="M0 0h5L2.500 3Z" fill="currentColor"/></svg><svg class="h-[2px] w-1" viewBox="0 0 5 3"><path d="M0 0h5L2.500 3Z" fill="currentColor"/></svg></span></div>
                    <div class="relative ml-[7px] flex w-[37px] items-center"><select aria-label="Unit" disabled class="h-full w-full appearance-none border border-[#b4b8be] bg-[#f2f3f5] pl-[2px] text-[#888]"><option>pm</option></select><svg class="pointer-events-none absolute right-1 h-[3px] w-[5px] text-[#888]"><use href="#arrow"/></svg></div>
                  </div>
                </div>
              </div>
            </div>
            <div class="flex h-[41px] shrink-0 items-center justify-between pr-3 pl-[9px] [font-family:Liberation_Sans,sans-serif] text-[#222]">
              <label class="flex items-center gap-[2px]"><input type="checkbox" class="size-[10px] appearance-none border border-[#8a9098] bg-[#f2f4f8]">Auto Detect</label>
              <button class="h-[21px] w-[47px] rounded-sm border-2 border-[#3a9cc4] bg-linear-to-b from-[#f0f7fb] via-[#dceef6] to-[#b8dcec] [font-family:Roboto,sans-serif]">Detect</button>
            </div>
          </div>
          <nav class="mb-[1px] flex h-[16px] shrink-0 items-center bg-[#e4e7eb] pl-1">
            <button class="flex w-[62px] items-center gap-[2px]"><svg class="h-3 w-[13px]" viewBox="0 0 13 12"><circle cx="5" cy="6.500" r="5" fill="#1890d0"/><path d="M1 4C4 2 6 5 4 7S6 10 5 11C2 11 0 8 1 4Z" fill="#30b040"/><rect x="7" y=".5" width="5.500" height="9" fill="#eef4f8" stroke="#678"/><path d="M8 3h3.500M8 5h3.500" stroke="#89a"/></svg>SPIP Onli...</button>
            <button class="flex w-[60px] items-center gap-[2px]"><svg class="h-3 w-[12px]" viewBox="0 0 12 12"><rect x=".5" y=".5" width="6" height="7" fill="#e8f0f8" stroke="#68a"/><circle cx="6" cy="5" r="3" fill="#7ac0e8" stroke="#246" /><path d="M5 9L10 11L11 9L8 7Z" fill="#2ca060"/></svg>View Set...</button>
            <button class="flex flex-1 items-center gap-[2px]"><svg class="h-2 w-[13px]" viewBox="0 0 13 8"><path d="M0 7L1 3L2 6L3 1L4 6L6 3L7 6L8 1L9 6L10 3L11 6L12 1L13 7" fill="none" stroke="#3a3ad8"/></svg>Roughn...</button>
            <button class="mr-[6px] flex h-full w-[59px] items-center gap-[2px] border-x border-b border-[#c4c8ce] bg-white pl-[2px]"><svg class="size-3"><use href="#dots"/></svg>Particle ,..</button>
          </nav>
        </aside>
      </div>

      <footer class="flex h-5 shrink-0 items-center justify-end border-t border-[#9aa0a8] bg-linear-to-b from-[#dfe2e6] to-[#c4c8cc]">
        <div class="flex h-4 w-[204px] items-center border-l border-[#9aa0a8] pl-[11px]"><span class="flex-1">In Units</span>
          <svg class="size-[9px] self-end" viewBox="0 0 9 9"><path d="M6 0h2v2H6ZM3 3h2v2H3ZM6 3h2v2H6ZM0 6h2v2H0ZM3 6h2v2H3ZM6 6h2v2H6Z" fill="#f4f5f6" stroke="#9aa0a8" stroke-width=".4"/></svg></div>
      </footer>
      <div class="h-[2px] shrink-0 bg-[#55585c]"></div>
    </div>
    <div class="w-[7px] shrink-0 border-l border-[#888] bg-linear-to-r from-[#c4c4c4] to-[#3c3c3c]"></div>
  </div>
</div>

<svg class="pointer-events-none absolute top-[41px] left-[1163px] h-4 w-3" viewBox="0 0 12 16" aria-hidden="true"><path d="M1.500 1V12.500L4.200 10L6.200 14.500L8.200 13.500L6.200 9.500H10Z" fill="#fff" stroke="#333"/></svg>

<script>
// Particle outlines: centre x, centre y, radius x, radius y, fill, contour (three units per screen pixel).
const P=[
[203,232,13,15,'#8a7080','#4040a0'],[292,212,20,14,'#6f9a18','#30c020'],[386,214,27,28,'#f08868','#ff6040'],[258,260,22,24,'#86a428','#40d820'],[187,322,20,25,'#e08878','#f04060'],
[545,243,24,24,'#a89484','#705098'],[655,252,23,22,'#a898a0','#3030b0'],[665,285,20,20,'#a898a0','#3030b0'],[751,262,33,34,'#d09868','#e08040'],[835,267,18,18,'#f08858','#e05020'],[788,216,12,10,'#588020','#20a020'],
[320,290,16,16,'#a0b090','#3c6ea0'],[382,312,47,44,'#a6b294','#3c6ea0'],[486,296,36,36,'#c4b078','#c8a060'],[593,302,25,26,'#c8d048','#b0f020'],[550,345,21,21,'#c08870','#c04080'],[682,352,20,20,'#b4a838','#a8b010'],[621,375,22,24,'#c07860','#d04858'],
[852,312,16,20,'#8c9870','#208060'],[844,336,24,21,'#8c9870','#208060'],[787,350,15,20,'#a8b494','#3068a0'],[781,378,26,25,'#a8b494','#3068a0'],[272,347,30,30,'#ac9030','#c8a010'],[305,385,38,40,'#ac9030','#c8a010'],[196,390,29,28,'#90b4a0','#30a0a0'],[388,408,20,20,'#e08484','#e03070'],
[466,388,28,30,'#d8bc80','#f0c8a0'],[515,395,20,20,'#d8bc80','#f0c8a0'],[527,437,20,20,'#d8bc80','#f0c8a0'],[872,397,18,20,'#b8c030','#e0f000'],[650,436,26,25,'#8c9858','#20a060'],[704,447,29,28,'#8c9858','#20a060'],[170,462,16,26,'#80a090','#3090a0'],[318,467,23,22,'#94a478','#30a870'],
[257,458,17,18,'#b08830','#d88010'],[259,502,30,31,'#b48c34','#d88010'],[480,492,24,24,'#e8cc84','#f8d0b0'],[604,478,20,19,'#c07880','#b040a0'],[616,515,26,30,'#c07880','#b040a0'],[806,475,34,34,'#c88c84','#8c3c78'],[855,485,36,38,'#c88c84','#8c3c78'],[880,530,26,30,'#c88c84','#8c3c78'],
[450,538,22,22,'#f08088','#f03080'],[530,548,14,15,'#d87020','#f08020'],[559,566,20,20,'#60a058','#20c880'],[725,536,22,22,'#d0bc38','#f0e000'],[806,552,26,25,'#78b858','#30e070'],[190,562,28,42,'#8cb890','#20c0b0'],[292,578,26,26,'#dcb044','#f0a010'],[371,572,33,33,'#c0989c','#a048b0'],
[446,613,24,24,'#bcbc70','#a0e080'],[546,653,43,45,'#e8be78','#f8b070'],[630,585,12,12,'#e09aa0','#d040c0'],[660,628,46,50,'#e09aa0','#d040c0'],[775,623,33,38,'#888058','#686020'],[882,635,24,30,'#dc98a0','#c060b0'],[238,648,29,32,'#d8a870','#f0a870'],[401,668,28,28,'#b0b46c','#80c060'],
[320,688,27,26,'#cc9080','#f090a0'],[325,724,18,22,'#cc9080','#f090a0'],[223,738,33,33,'#f07c50','#f04820'],[420,765,31,31,'#a89888','#5048a0'],[417,722,13,14,'#a08878','#5048a0'],[495,724,24,24,'#60c030','#30f020'],[562,762,26,24,'#e09c70','#e07040'],[635,718,34,34,'#acb440','#b8e040'],[783,710,19,19,'#e8a868','#f08040'],[718,733,21,24,'#5c9820','#30a020'],
[814,762,23,23,'#a898ac','#3030c0'],[790,793,15,16,'#a898ac','#3030c0'],[864,720,18,26,'#888098','#3030b0'],[232,802,23,26,'#68887c','#3070b0'],[322,795,26,27,'#f08858','#e04830'],[362,817,23,24,'#f08858','#e04830'],[510,828,35,37,'#b8cc30','#d0f020'],[617,828,33,36,'#e07068','#f05060'],[716,794,28,28,'#b4a068','#d0a050'],[800,858,30,30,'#d89898','#b060a0'],
[211,878,24,24,'#e08480','#e04070'],[300,882,32,38,'#a8b430','#b8d820'],[270,872,12,12,'#a8b430','#b8d820'],[375,915,27,27,'#d09840','#e08020'],[441,890,29,32,'#d8bc7c','#f0d0b0'],[562,890,25,24,'#68a074','#3090b0'],[518,925,28,20,'#789c6c','#40b880'],[711,874,32,32,'#98b098','#3090c0'],[650,930,33,28,'#c08888','#a05090'],[810,928,25,12,'#b0a030','#c0b020'],
[168,770,12,18,'#40802c','#20b020'],[166,910,16,24,'#c0b020','#e0d000'],[168,665,10,40,'#805060','#a050b0'],[888,905,12,16,'#40a060','#20c080'],[742,930,14,10,'#d06060','#e04060'],[168,810,9,22,'#607880','#306090'],[878,814,6,6,'#804810','#709010'],[392,470,20,22,'#b8a048','#d8b820'],[384,490,18,16,'#b8a048','#d8b820'],[402,492,14,14,'#b8a048','#d8b820']];
// Dark pits inside or at the edge of particles.
const D=[[375,290,12,14,'#7d5a28'],[268,344,9,8,'#4a1c00'],[285,364,9,9,'#4a1c00'],[305,386,7,7,'#704010'],[459,380,7,8,'#8a5010'],[257,457,6,6,'#6a2c00'],[253,482,6,6,'#6a2c00'],[678,437,12,9,'#560404'],[590,498,14,10,'#560404'],[849,485,9,9,'#884040'],[612,510,9,9,'#904040'],[450,538,7,7,'#a02030'],[371,605,12,9,'#700c10'],[543,645,8,9,'#a86820'],[566,622,8,6,'#703010'],[223,741,8,8,'#b03010'],[638,718,9,9,'#686010'],[235,801,11,9,'#384038'],[513,820,8,8,'#607010'],[626,836,7,8,'#a02820'],[602,850,14,14,'#560404'],[280,888,16,12,'#560404'],[425,896,16,12,'#560404'],[563,870,12,9,'#560404'],[700,902,13,12,'#560404'],[722,880,9,8,'#507068'],[855,708,12,12,'#560404'],[345,803,5,9,'#801808'],[212,902,14,8,'#560404'],[305,724,6,8,'#700c10'],[788,340,7,6,'#506038']];
const ell=(a,x='')=>`<ellipse cx="${a[0]}" cy="${a[1]}" rx="${a[2]}" ry="${a[3]}" ${x}/>`;
document.getElementById('scan').innerHTML=`
<defs><clipPath id="cp"><rect x="57" y="182" width="238" height="238"/></clipPath>
<linearGradient id="bar" x1="0" y1="0" x2="0" y2="1"><stop offset="0" stop-color="#fff"/><stop offset=".12" stop-color="#fff"/><stop offset=".3" stop-color="#d8c080"/><stop offset=".42" stop-color="#b88c10"/><stop offset=".55" stop-color="#8c5400"/><stop offset=".66" stop-color="#6a1800"/><stop offset=".76" stop-color="#480000"/><stop offset=".86" stop-color="#180000"/><stop offset=".92" stop-color="#000"/></linearGradient>
<filter id="soft"><feGaussianBlur stdDeviation="3"/></filter><filter id="softer"><feGaussianBlur stdDeviation="1.500"/></filter>
<filter id="rough" x="-5%" y="-5%" width="110%" height="110%"><feTurbulence baseFrequency=".04" numOctaves="1" seed="4" result="n"/><feDisplacementMap in="SourceGraphic" in2="n" scale="5" xChannelSelector="R" yChannelSelector="G"/></filter>
<filter id="grain"><feTurbulence type="fractalNoise" baseFrequency=".25" numOctaves="2"/><feColorMatrix values="0 0 0 0 .5  0 0 0 0 .05  0 0 0 0 0  1.500 0 0 0 -.6"/></filter></defs>
<text x="19" y="150" font-size="10">irregularparticles.bcr</text><text x="177" y="178" text-anchor="middle" xml:space="preserve">Z Range:  74.86 pm</text>
<g clip-path="url(#cp)"><rect x="57" y="182" width="238" height="238" fill="#520202"/><rect x="57" y="182" width="238" height="238" filter="url(#grain)" opacity=".2"/>
<g transform="translate(-.3 110) scale(.3333)"><g filter="url(#soft)" stroke="#240000" fill="none"><path d="M440 580L740 360" stroke-width="10"/><path d="M290 710L500 570" stroke-width="9" opacity=".8"/><path d="M430 730L540 600M770 440L850 400M350 660L420 600" stroke-width="7" opacity=".7"/><path d="M735 365L760 345" stroke="#0a0000" stroke-width="12"/></g>
<path d="M868 840L862 930" stroke="#904010" stroke-width="10" opacity=".5" filter="url(#soft)"/>
<g filter="url(#rough)">${P.map(p=>ell([p[0],p[1],p[2]+1,p[3]+1],`fill="#7a3a1c" stroke="${p[5]}" stroke-width="3"`)).join('')}
<g filter="url(#soft)">${P.map(p=>ell([p[0],p[1],p[2]-2,p[3]-2],`fill="${p[4]}"`)).join('')}</g>
<g filter="url(#softer)">${D.map(d=>ell(d,`fill="${d[4]}"`)).join('')}</g></g></g></g>
<path d="M57.500 300V360" stroke="#b09" opacity=".3"/><path d="M57.500 231V300" stroke="#5ff"/><path d="M55 183h3M55 301h3M55 419h3M58 420v3M176 420v3M294 420v3" stroke="#222"/>
<rect x="303.500" y="182.500" width="25" height="237" fill="url(#bar)" stroke="#222"/><path d="M328 230.500h3M328 294.500h3M328 357.500h3" stroke="#222"/>
<g font-size="8" font-family="Liberation Mono, monospace"><text x="326" y="233" text-anchor="end" fill="#555">40</text><text x="326" y="297" text-anchor="end" fill="#ddd">20</text><text x="326" y="360" text-anchor="end" fill="#ddd">0</text></g>
<text x="57" y="432">-2.50</text><text x="176" y="432" text-anchor="middle">0</text><text x="295" y="432" text-anchor="end">2.50</text><text x="176" y="443" text-anchor="middle">X Range: 5 µm</text>
<text transform="translate(53 201) rotate(-90)">2.50</text><text transform="translate(53 304) rotate(-90)">0</text><text transform="translate(53 420) rotate(-90)">-2.50</text><text transform="translate(41 301) rotate(-90)" text-anchor="middle">Y Range: 5 µm</text>`;

function histogram(id,o){
  const B=427,T=164,W=250;let s=`<rect x="${o.x}" y="${T}" width="${W}" height="${B-T}" fill="#f4f4f4"/>`;
  for(let v=2;v<=o.max;v+=2){const y=B-v*o.unit;s+=`<path d="M${o.x} ${y}h${W}" stroke="#dedede"/><text x="${o.x-6}" y="${y+3}" text-anchor="end">${v}</text>`}
  o.ticks.forEach((t,i)=>{const x=o.first+i*o.step;s+=`<path d="M${x} ${T}V${B}" stroke="#dedede"/><text x="${x}" y="437" text-anchor="middle">${t}</text>`});
  o.bars.forEach((v,i)=>{if(v)s+=`<rect x="${o.x+i*12.48}" y="${B-v*o.unit}" width="11.800" height="${v*o.unit}" fill="#000080"/>`});
  s+=`<rect x="${o.x}" y="${T}" width="${W}" height="${B-T}" fill="none" stroke="#333"/><text x="${o.x+W/2}" y="453" text-anchor="middle">${o.xl}</text><text transform="translate(${o.x-37} 295) rotate(-90)" text-anchor="middle">${o.yl}</text>`;
  document.getElementById(id).innerHTML=s;
}
histogram('area',{x:399.5,max:18,unit:13.81,first:420.3,step:24.2,ticks:['0.24','0.28','0.32','0.36','0.4','0.44','0.48','0.52','0.56','0.6'],xl:'Area [µm²]',yl:'Percent [%]',bars:[11.54,5.13,5.13,12.82,17.95,7.69,2.56,10.26,7.69,3.85,6.41,1.28,0,0,2.56,0,0,1.28,2.56,1.28]});
histogram('zvol',{x:736,max:16,unit:14.83,first:774,step:37.7,ticks:['2000','4000','6000','8000','10000','12000'],xl:'Z Volume [nm³]',yl:'Percent',bars:[14.1,2.56,8.97,16.67,10.26,6.41,3.85,7.69,14.1,1.28,5.13,0,2.56,0,0,2.56,0,0,1.28,2.56]});

const rows=[['1','#0000ff','213.157685','35685.5070...','0.011355','0.038411','0.027056','0.996139'],['2','#00ff00','145.782082','16691.6081...','0.011427','0.039658','0.028230','3.413867'],['3','#ff0000','285.211242','63888.5691...','0.011617','0.055011','0.043394','2.076119'],['4','#000080','390.424280','119719.120...','0.011386','0.047724','0.036338','1.044181'],['5','#008000','104.845738','8633.590422','0.011448','0.034003','0.022555','2.962939'],['6','#800000','523.062439','214880.472...','0.011274','0.041814','0.030540','0.994888'],['7','#0000c8','463.645298','168834.657...','0.011288','0.042331','0.031043','1.057405']];
const cell=v=>`<td class="border-r border-b border-[#eef0f2] p-0 pr-[2px] text-right">${v}</td>`;
document.getElementById('rows').innerHTML=rows.map((r,i)=>`<tr class="${i%3==2?'h-[14px]':'h-[13px]'}"><td class="border-r border-b border-[#eef0f2] p-0"><div class="flex items-center border-l-[13px] border-[#f0f1f3] pr-px pl-1"><span class="flex-1">${r[0]}</span><span class="size-[10px]" style="background:${r[1]}"></span></div></td>${['Particle',...r.slice(2)].map(cell).join('')}</tr>`).join('');
const sums=[['Minimum','22.103422','383.715130','0.011274','0.011324','0.000018','0.596091'],['Maximum','723.359612','410958.904...','0.011637','0.055011','0.043394','9.929224'],['Mean','367.067728','123032.353...','0.011348','0.042044','0.030696','1.517765'],['Std. Dev.','150.306546','90765.7214...','0.000087','0.007241','0.007262','1.412394']];
document.getElementById('summary').innerHTML=sums.map(r=>`<tr><th class="border-r border-b border-[#eef0f2] p-0 text-left font-normal"><div class="border-l-[13px] border-[#f0f1f3] pl-1">${r[0]}</div></th>${['',...r.slice(1)].map(cell).join('')}</tr>`).join('');
</script>
</body>
</html>
